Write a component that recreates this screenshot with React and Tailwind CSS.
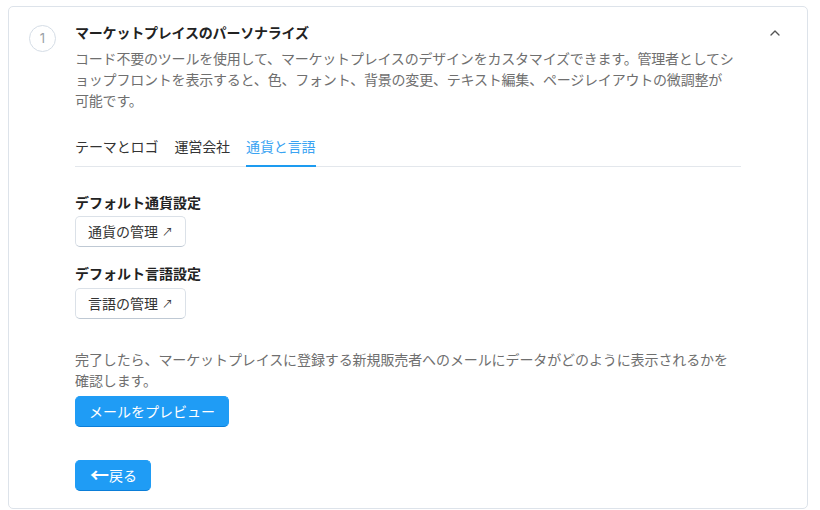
import { ChevronUp } from 'lucide-react';

const font = { fontFamily: '"Noto Sans CJK JP", "Noto Sans", sans-serif' };

export default function App() {
    return (
        <div className="bg-white w-[820px] h-[510px] pt-[6px] pl-[8px]" style={font}>
            {/* --- CARD --- */}
            <div className="w-[800px] h-[503px] border border-[#dde3ea] rounded-[5px] flex pl-5 pr-6 pt-[15px]">
                <div className="w-[27px] h-[27px] mt-[3px] rounded-full border border-[#d5dde6] flex items-center justify-center text-[13px] text-[#9aa0a6] shrink-0 font-['Inter',sans-serif]">
                    1
                </div>

                <div className="ml-[19px] w-[666px] flex flex-col">
                    <h2 className="text-[14px] leading-5 font-bold text-[#222] tracking-[-0.2px]">
                        マーケットプレイスのパーソナライズ
                    </h2>
                    <p className="mt-[6px] text-[14px] leading-[21px] text-[#6f6f6f] tracking-[-0.2px]">
                        コード不要のツールを使用して、マーケットプレイスのデザインをカスタマイズできます。管理者としてショップフロントを表示すると、色、フォント、背景の変更、テキスト編集、ページレイアウトの微調整が<br />可能です。
                    </p>

                    {/* --- TABS --- */}
                    <div className="mt-[25px] flex gap-4 border-b border-[#e3e7ec] text-[14px] leading-5 tracking-[-0.1px]">
                        <div className="pb-[10px] text-[#333]">テーマとロゴ</div>
                        <div className="pb-[10px] text-[#333]">運営会社</div>
                        <div className="pb-[9px] text-[#3aa3f2] border-b-2 border-[#1d9bf0] -mb-px">通貨と言語</div>
                    </div>

                    <div className="mt-[25px] text-[14px] leading-5 font-bold text-[#222]">デフォルト通貨設定</div>
                    <button className="mt-1 self-start h-[31px] px-[12px] text-[14px] text-[#333] bg-white border border-[#dbe1e8] border-b-[#bfc9d4] rounded-[5px] flex items-center gap-1">
                        通貨の管理 <span className="text-[11px]">↗</span>
                    </button>

                    <div className="mt-4 text-[14px] leading-5 font-bold text-[#222]">デフォルト言語設定</div>
                    <button className="mt-[5px] self-start h-[31px] px-[12px] text-[14px] text-[#333] bg-white border border-[#dbe1e8] border-b-[#bfc9d4] rounded-[5px] flex items-center gap-1">
                        言語の管理 <span className="text-[11px]">↗</span>
                    </button>

                    <p className="mt-[30px] text-[14px] leading-[21px] text-[#6f6f6f] tracking-[-0.1px]">
                        完了したら、マーケットプレイスに登録する新規販売者へのメールにデータがどのように表示されるかを<br />確認します。
                    </p>
                    <button className="mt-[5px] self-start h-[31px] px-[13px] text-[14px] text-white bg-[#1f9cf5] border border-[#1f9cf5] border-b-[#0b7ed8] rounded-[5px]">
                        メールをプレビュー
                    </button>

                    <button className="mt-[33px] self-start h-[31px] pl-[14px] pr-[13px] text-[14px] text-white bg-[#1f9cf5] border border-[#1f9cf5] border-b-[#0b7ed8] rounded-[5px] flex items-center">
                        <span className="text-[19px] leading-none font-bold -mt-[2px]">←</span>戻る
                    </button>
                </div>

                <div className="ml-auto pt-[3px] text-[#555]">
                    <ChevronUp size={16} strokeWidth={2} />
                </div>
            </div>
        </div>
    );
}
